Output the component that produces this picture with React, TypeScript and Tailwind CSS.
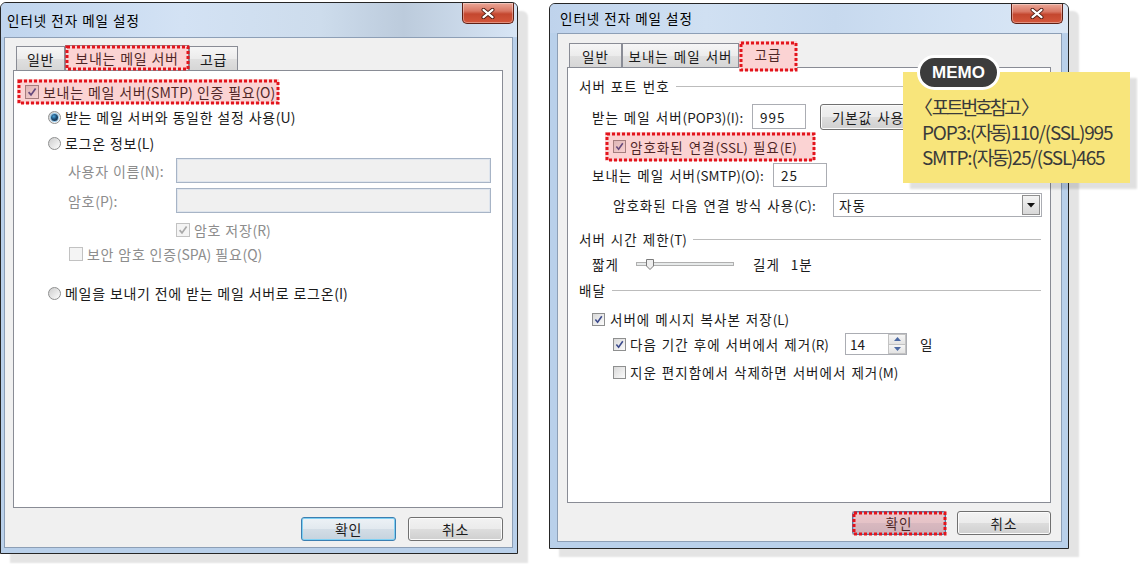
import type { ReactNode } from 'react';

// Hangul + spaces keep the container's letter spacing, latin runs are reset
const T = ({ children }: { children: string }) => (
	<>
		{children.split(/([^가-힣\s]+)/).map((part, i) =>
			i % 2 === 1 ? (
				<span key={i} className="tracking-normal">
					{part}
				</span>
			) : (
				part
			)
		)}
	</>
);

const Highlight = ({ className = '', children }: { className?: string; children?: ReactNode }) => (
	<div className={`relative ${className}`}>
		{children}
		<span className="pointer-events-none absolute inset-0 bg-[rgba(238,70,70,0.24)]" />
		<svg className="pointer-events-none absolute left-[1.5px] top-[1.5px] h-[calc(100%-3px)] w-[calc(100%-3px)] overflow-visible">
			<rect width="100%" height="100%" fill="none" stroke="#e3141c" strokeWidth="3" strokeDasharray="3 2" />
		</svg>
	</div>
);

const CheckBox = ({
	checked = false,
	disabled = false,
	size = 'h-[13px] w-[13px]',
}: {
	checked?: boolean;
	disabled?: boolean;
	size?: string;
}) => (
	<span
		className={`relative inline-block shrink-0 border ${size} ${
			disabled ? 'border-[#c2c2c2] bg-[#f4f4f4]' : 'border-[#8e8f8f] bg-[linear-gradient(135deg,#d9d9d9,#fbfbfb)]'
		}`}
	>
		{checked && (
			<svg viewBox="0 0 12 12" className="absolute inset-0 h-full w-full">
				<path d="M2.6 6.1 L5 8.9 L9.6 2.4" fill="none" stroke={disabled ? '#a9a9a9' : '#3b4a8c'} strokeWidth="1.7" />
			</svg>
		)}
	</span>
);

const Radio = ({ checked = false }: { checked?: boolean }) => (
	<span className="relative inline-flex h-[13px] w-[13px] shrink-0 items-center justify-center rounded-full border border-[#8e8f8f] bg-[linear-gradient(135deg,#cdcdcd,#fdfdfd)]">
		{checked && (
			<span className="h-[7px] w-[7px] rounded-full bg-[radial-gradient(circle_at_40%_35%,#4aa6dc_0%,#1c4c75_45%,#0a1c30_100%)] ring-1 ring-[#8fc6ea]" />
		)}
	</span>
);

const Tab = ({ label, className = '' }: { label: string; className?: string }) => (
	<div
		className={`flex h-[24px] shrink-0 items-center justify-center border border-b-0 border-[#898c95] bg-[linear-gradient(#f6f6f6_0%,#ececec_50%,#e0e0e0_51%,#d6d6d6_100%)] ${className}`}
	>
		{label}
	</div>
);

const CloseButton = ({ className = '' }: { className?: string }) => (
	<div
		className={`flex w-[52px] shrink-0 items-center justify-center rounded-b-[5px] border border-t-0 border-[#5e1f14] bg-[linear-gradient(#eba797_0%,#d97764_40%,#c4472f_55%,#d4563b_100%)] shadow-[inset_0_0_0_1px_rgba(255,255,255,0.35)] ${className}`}
	>
		<svg width="14" height="11" viewBox="0 0 14 11">
			<path d="M2.5 1.8 L11.5 9.2 M11.5 1.8 L2.5 9.2" stroke="#4b1a12" strokeWidth="4" strokeLinecap="round" />
			<path d="M2.5 1.8 L11.5 9.2 M11.5 1.8 L2.5 9.2" stroke="#ffffff" strokeWidth="2.2" strokeLinecap="round" />
		</svg>
	</div>
);

const WinButton = ({
	label,
	isDefault = false,
	className = '',
}: {
	label: string;
	isDefault?: boolean;
	className?: string;
}) => (
	<div
		className={`flex h-[24px] w-[94px] items-center justify-center rounded-[3px] border ${
			isDefault
				? 'border-[#3c7fb1] bg-[linear-gradient(#edf2f6_0%,#e2e9ef_49%,#d3dde6_50%,#c6d3de_100%)] shadow-[inset_0_0_0_1px_#7fd0f3]'
				: 'border-[#707070] bg-[linear-gradient(#f2f2f2_0%,#ebebeb_49%,#dddddd_50%,#cfcfcf_100%)] shadow-[inset_0_0_0_1px_#fbfbfb]'
		} ${className}`}
	>
		{label}
	</div>
);

const GroupTitle = ({ label, className = '' }: { label: string; className?: string }) => (
	<div className={`mr-[9px] ml-[11px] flex h-[18px] items-center ${className}`}>
		<span>
			<T>{label}</T>
		</span>
		<span className="ml-[6px] h-0 flex-1 border-t border-[#bcbcbc]" />
	</div>
);

const LeftDialog = () => (
	<div className="mt-[2px] flex h-[552px] w-[518px] shrink-0 flex-col rounded-t-[6px] border border-[#262626] bg-[#b9d0ea] shadow-[10px_9px_2px_#e4e4e4]">
		<div className="flex h-[34px] items-start rounded-t-[5px] bg-[linear-gradient(90deg,#c0d5ee_0%,#d3e2f4_35%,#cddcec_62%,#bccbdc_78%,#d7e5f5_100%)]">
			<span className="pt-[8px] pl-[6px] text-[13.5px] leading-[18px] tracking-[1px] text-black">인터넷 전자 메일 설정</span>
			<CloseButton className="mr-[3px] ml-auto h-[21px]" />
		</div>
		<div className="mr-[4px] mb-[5px] ml-[3px] flex flex-1 flex-col border border-[#8d9fb6] bg-[#f0f0f0] pt-[7px] pl-[8px] text-[14px] leading-[20px] tracking-[0.7px] text-[#1b1b1b] [word-spacing:0.3px]">
			<div className="flex h-[25px] items-end pl-[3px]">
				<Tab label="일반" className="w-[49px]" />
				<Highlight className="h-[25px] w-[124px]">
					<div className="flex h-full w-full items-center justify-center border border-b-0 border-[#898c95] bg-white">
						보내는 메일 서버
					</div>
				</Highlight>
				<Tab label="고급" className="w-[49px]" />
			</div>
			<div className="flex h-[438px] w-[490px] flex-col border border-[#898c95] bg-white">
				<Highlight className="mt-[8px] ml-[3px] flex h-[25px] w-[262px] items-center pl-[8px]">
					<CheckBox checked size="h-[14px] w-[14px]" />
					<span className="ml-[4px]">
						<T>보내는 메일 서버(SMTP) 인증 필요(O)</T>
					</span>
				</Highlight>
				<div className="mt-[3px] ml-[34px] flex h-[20px] items-center">
					<Radio checked />
					<span className="ml-[4px]">
						<T>받는 메일 서버와 동일한 설정 사용(U)</T>
					</span>
				</div>
				<div className="mt-[6px] ml-[34px] flex h-[20px] items-center">
					<Radio />
					<span className="ml-[4px]">
						<T>로그온 정보(L)</T>
					</span>
				</div>
				<div className="mt-[5px] ml-[54px] flex h-[25px] items-center">
					<span className="w-[108px] text-[#8d8d8d]">
						<T>사용자 이름(N):</T>
					</span>
					<div className="h-[25px] w-[315px] border border-[#a7b4c6] bg-[#f0f0f0] shadow-[inset_0_0_0_1px_#dfe5ed]" />
				</div>
				<div className="mt-[5px] ml-[54px] flex h-[25px] items-center">
					<span className="w-[108px] text-[#8d8d8d]">
						<T>암호(P):</T>
					</span>
					<div className="h-[25px] w-[315px] border border-[#a7b4c6] bg-[#f0f0f0] shadow-[inset_0_0_0_1px_#dfe5ed]" />
				</div>
				<div className="mt-[7px] ml-[162px] flex h-[20px] items-center">
					<CheckBox checked disabled size="h-[14px] w-[14px]" />
					<span className="ml-[4px] text-[#8d8d8d]">
						<T>암호 저장(R)</T>
					</span>
				</div>
				<div className="mt-[4px] ml-[55px] flex h-[20px] items-center">
					<CheckBox disabled size="h-[14px] w-[14px]" />
					<span className="ml-[4px] text-[#8d8d8d]">
						<T>보안 암호 인증(SPA) 필요(Q)</T>
					</span>
				</div>
				<div className="mt-[19px] ml-[34px] flex h-[20px] items-center">
					<Radio />
					<span className="ml-[4px]">
						<T>메일을 보내기 전에 받는 메일 서버로 로그온(I)</T>
					</span>
				</div>
			</div>
			<div className="mt-[9px] flex w-[490px] justify-end gap-[12px]">
				<WinButton label="확인" isDefault className="w-[95px]" />
				<WinButton label="취소" className="w-[95px]" />
			</div>
		</div>
	</div>
);

const RightDialog = () => (
	<div className="mt-[3px] ml-[31px] flex h-[546px] w-[520px] shrink-0 flex-col rounded-t-[6px] border border-[#262626] bg-[#b9d0ea] shadow-[10px_8px_2px_#e4e4e4]">
		<div className="flex h-[29px] items-start rounded-t-[5px] bg-[linear-gradient(90deg,#bfd3ec_0%,#d0e0f2_30%,#c7d9ee_55%,#d2e2f4_80%,#dbe7f5_100%)]">
			<span className="pt-[5px] pl-[10px] text-[13.5px] leading-[18px] tracking-[1px] text-black">인터넷 전자 메일 설정</span>
			<CloseButton className="mr-[5px] ml-auto h-[20px]" />
		</div>
		<div className="mr-[6px] mb-[6px] ml-[7px] flex flex-1 flex-col border border-[#8d9fb6] bg-[#f0f0f0] pt-[7px] pl-[9px] text-[13.5px] leading-[18px] tracking-[1px] text-[#1b1b1b] [word-spacing:1px]">
			<div className="flex h-[26px] items-start pl-[2px]">
				<Tab label="일반" className="mt-[2px] w-[53px]" />
				<Tab label="보내는 메일 서버" className="mt-[2px] w-[117px]" />
				<Highlight className="relative z-10 h-[30px] w-[58px]">
					<div className="flex h-full w-full items-center justify-center bg-white pb-[4px]">고급</div>
				</Highlight>
			</div>
			<div className="flex h-[436px] w-[484px] flex-col border border-[#898c95] bg-white">
				<GroupTitle label="서버 포트 번호" className="mt-[9px]" />
				<div className="mt-[9px] ml-[24px] flex h-[25px] items-center">
					<span className="w-[160px] shrink-0">
						<T>받는 메일 서버(POP3)(I):</T>
					</span>
					<div className="flex h-[25px] w-[54px] shrink-0 items-center border border-[#abadb3] pl-[7px]">995</div>
					<WinButton label="기본값 사용" className="ml-[14px] h-[26px] w-[96px] shrink-0" />
				</div>
				<Highlight className="mt-[3px] ml-[37px] flex h-[29px] w-[210px] items-center pl-[8px]">
					<CheckBox checked />
					<span className="ml-[4px]">
						<T>암호화된 연결(SSL) 필요(E)</T>
					</span>
				</Highlight>
				<div className="mt-[2px] ml-[24px] flex h-[24px] items-center">
					<span className="w-[181px] shrink-0">
						<T>보내는 메일 서버(SMTP)(O):</T>
					</span>
					<div className="flex h-[24px] w-[54px] shrink-0 items-center border border-[#abadb3] pl-[7px]">25</div>
				</div>
				<div className="mt-[6px] ml-[45px] flex h-[24px] items-center">
					<span className="w-[220px] shrink-0">
						<T>암호화된 다음 연결 방식 사용(C):</T>
					</span>
					<div className="flex h-[24px] w-[209px] shrink-0 items-center border border-[#abadb3] pl-[5px]">
						<span className="flex-1">자동</span>
						<div className="mr-[1px] flex h-[20px] w-[18px] items-center justify-center border border-[#8f8f8f] bg-[linear-gradient(#f4f4f4,#d8d8d8)]">
							<svg width="8" height="5" viewBox="0 0 8 5">
								<path d="M0 0 H8 L4 4.5 Z" fill="#111111" />
							</svg>
						</div>
					</div>
				</div>
				<GroupTitle label="서버 시간 제한(T)" className="mt-[13px]" />
				<div className="mt-[7px] ml-[24px] flex h-[18px] items-center">
					<span className="w-[44px] shrink-0">짧게</span>
					<svg width="98" height="16" viewBox="0 0 98 16" className="shrink-0">
						<rect x="0.5" y="6.5" width="97" height="3" fill="#e7eaea" stroke="#b0b0b0" />
						<path d="M10.5 3.5 H17.5 V10 L14 13.5 L10.5 10 Z" fill="#eeeeee" stroke="#7a7a7a" />
					</svg>
					<span className="ml-[19px]">길게</span>
					<span className="ml-[11px]">1분</span>
				</div>
				<GroupTitle label="배달" className="mt-[8px]" />
				<div className="mt-[10px] ml-[24px] flex h-[20px] items-center">
					<CheckBox checked />
					<span className="ml-[5px]">
						<T>서버에 메시지 복사본 저장(L)</T>
					</span>
				</div>
				<div className="mt-[4px] ml-[45px] flex h-[22px] items-center">
					<CheckBox checked />
					<span className="ml-[4px] w-[215px] shrink-0">
						<T>다음 기간 후에 서버에서 제거(R)</T>
					</span>
					<div className="flex h-[22px] w-[62px] shrink-0 items-center border border-[#abadb3] pl-[4px] tracking-normal">
						<span className="flex-1">14</span>
						<div className="flex h-[20px] w-[18px] flex-col">
							<div className="flex flex-1 items-center justify-center border border-[#c3c3c3] bg-[linear-gradient(#f6f6f6,#e3e3e3)]">
								<svg width="7" height="4" viewBox="0 0 7 4">
									<path d="M0 4 L3.5 0 L7 4 Z" fill="#4d6aa3" />
								</svg>
							</div>
							<div className="flex flex-1 items-center justify-center border border-t-0 border-[#c3c3c3] bg-[linear-gradient(#f6f6f6,#e3e3e3)]">
								<svg width="7" height="4" viewBox="0 0 7 4">
									<path d="M0 0 L7 0 L3.5 4 Z" fill="#4d6aa3" />
								</svg>
							</div>
						</div>
					</div>
					<span className="ml-[13px]">일</span>
				</div>
				<div className="mt-[7px] ml-[45px] flex h-[20px] items-center">
					<CheckBox />
					<span className="ml-[4px]">
						<T>지운 편지함에서 삭제하면 서버에서 제거(M)</T>
					</span>
				</div>
			</div>
			<div className="mt-[8px] flex w-[484px] justify-end gap-[11px]">
				<Highlight className="h-[24px] w-[94px]">
					<WinButton label="확인" isDefault />
				</Highlight>
				<WinButton label="취소" />
			</div>
		</div>
	</div>
);

const Memo = () => (
	<>
		<div className="absolute top-[72px] left-[903px] h-[111px] w-[227px] bg-[#f8e57b] pt-[22px] pl-[19px] text-[19px] leading-[25px] tracking-[-1.2px] text-[#3a3a3a] shadow-[7px_6px_2px_rgba(0,0,0,0.12)]">
			<div>
				<span className="-ml-[8px]">〈</span>
				<span className="tracking-[-3px]">포트번호참고</span>
				<span className="ml-[2px]">〉</span>
			</div>
			<div>
				POP3:(<span className="tracking-[-2.5px]">자동</span>)110/(SSL)995
			</div>
			<div>
				SMTP:(<span className="tracking-[-2.5px]">자동</span>)25/(SSL)465
			</div>
		</div>
		<div className="absolute top-[55px] left-[917px] flex h-[35px] w-[83px] items-center justify-center rounded-full border-[3px] border-white bg-[#3c3c3c] font-['Liberation_Sans',sans-serif] text-[17px] font-bold text-white">
			MEMO
		</div>
	</>
);

export default function App() {
	return (
		<div className="relative h-[564px] w-[1138px] overflow-hidden bg-white font-['Noto_Sans_CJK_KR','Noto_Sans',sans-serif] whitespace-nowrap">
			<div className="flex items-start">
				<LeftDialog />
				<RightDialog />
			</div>
			<Memo />
		</div>
	);
}
